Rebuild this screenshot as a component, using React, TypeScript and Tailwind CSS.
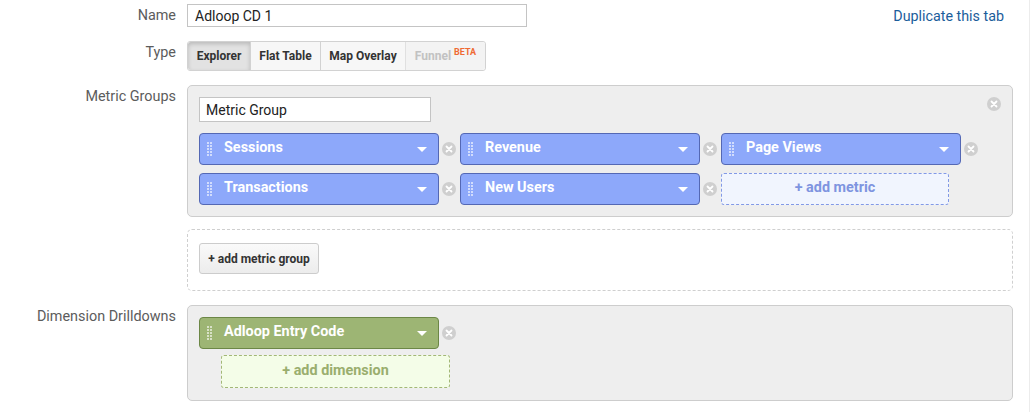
import React from 'react';

const font = { fontFamily: 'Roboto, "Liberation Sans", sans-serif' };

function Grip() {
  return (
    <span className="grid grid-cols-2 gap-x-[1px] gap-y-[1px] w-[5px] shrink-0">
      {Array.from({ length: 10 }).map((_, i) => (
        <span key={i} className="w-[2px] h-[2px] bg-white/60" />
      ))}
    </span>
  );
}

function CloseDot() {
  return (
    <svg width="14" height="14" viewBox="0 0 14 14" className="shrink-0">
      <circle cx="7" cy="7" r="7" fill="#cfcfcf" />
      <path d="M4.5 4.5 L9.5 9.5 M9.5 4.5 L4.5 9.5" stroke="#ffffff" strokeWidth="1.8" strokeLinecap="round" />
    </svg>
  );
}

function Caret() {
  return (
    <svg width="10" height="5" viewBox="0 0 10 5" className="shrink-0">
      <path d="M0 0 L10 0 L5 5 Z" fill="#ffffff" />
    </svg>
  );
}

function Pill({ label, green }: { label: string; green?: boolean }) {
  return (
    <div
      className={
        'w-[240px] h-[32px] rounded-[4px] border flex items-center pl-[7px] pr-[11px] shrink-0 ' +
        (green ? 'bg-[#9db574] border-[#6c8746]' : 'bg-[#8da8fa] border-[#5468b4]')
      }
    >
      <Grip />
      <span className="ml-[12px] pb-[2px] text-[14.4px] font-bold text-white leading-none">{label}</span>
      <span className="ml-auto flex items-center">
        <Caret />
      </span>
    </div>
  );
}

function PillSlot({ label }: { label: string }) {
  return (
    <div className="flex items-center">
      <Pill label={label} />
      <span className="ml-[3px] mr-[4px] flex">
        <CloseDot />
      </span>
    </div>
  );
}

function Label({ children, className = '' }: { children: React.ReactNode; className?: string }) {
  return (
    <div className={'w-[176px] shrink-0 text-right text-[14.4px] leading-5 text-[#5c5c5c] ' + className}>
      {children}
    </div>
  );
}

export default function App() {
  return (
    <div style={font} className="w-[1030px] h-[412px] bg-white border-r border-[#ececec] pt-[4px] overflow-hidden">
      {/* Name */}
      <div className="flex items-center h-[23px]">
        <Label>Name</Label>
        <input
          readOnly
          value="Adloop CD 1"
          className="ml-[11px] w-[340px] h-[23px] border border-[#c4c4c4] px-[7px] text-[14px] text-[#222] outline-none"
          style={font}
        />
        <a className="ml-auto mr-[25px] text-[14.3px] leading-5 text-[#1b5d9b]">Duplicate this tab</a>
      </div>

      {/* Type */}
      <div className="flex items-start mt-[14px] h-[30px]">
        <Label className="pt-[2px]">Type</Label>
        <div className="ml-[11px] flex h-[30px] rounded-[3px] border border-[#d2d2d2] text-[12px] font-bold">
          <span className="w-[62px] flex items-center justify-center bg-[#e2e2e2] text-[#333] shadow-[inset_0_2px_4px_rgba(0,0,0,0.18)] rounded-l-[3px]">
            Explorer
          </span>
          <span className="w-[70px] flex items-center justify-center bg-[#f7f7f7] text-[#333] border-l border-[#d2d2d2]">
            Flat Table
          </span>
          <span className="w-[85px] flex items-center justify-center bg-[#f7f7f7] text-[#333] border-l border-[#d2d2d2]">
            Map Overlay
          </span>
          <span className="w-[80px] flex items-center justify-center bg-[#f3f3f3] text-[#c2c2c2] border-l border-[#e0e0e0] rounded-r-[3px]">
            Funnel
            <span className="ml-[3px] mb-[8px] text-[9px] leading-none text-[#ef6a33]">BETA</span>
          </span>
        </div>
      </div>

      {/* Metric Groups */}
      <div className="flex items-start mt-[14px]">
        <Label className="pt-[2px]">Metric Groups</Label>
        <div className="ml-[11px] w-[826px] h-[132px] bg-[#eeeeee] border border-[#cdcdcd] rounded-[5px] pl-[11px] pr-[11px] pt-[11px] flex">
          <div className="flex flex-col">
            <input
              readOnly
              value="Metric Group"
              className="w-[232px] h-[25px] bg-white border border-[#c4c4c4] px-[6px] text-[14px] text-[#222] outline-none"
              style={font}
            />
            <div className="mt-[11px] flex h-[32px]">
              <PillSlot label="Sessions" />
              <PillSlot label="Revenue" />
              <PillSlot label="Page Views" />
            </div>
            <div className="mt-[8px] flex h-[32px]">
              <PillSlot label="Transactions" />
              <PillSlot label="New Users" />
              <div className="w-[228px] h-[32px] rounded-[3px] border border-dashed border-[#8299e6] bg-[#f1f5fe] flex items-center justify-center pb-[2px] text-[14.4px] font-bold text-[#7e94e0]">
                + add metric
              </div>
            </div>
          </div>
          <span className="ml-auto flex h-[14px]">
            <CloseDot />
          </span>
        </div>
      </div>

      {/* Add metric group */}
      <div className="flex mt-[12px]">
        <div className="w-[176px] shrink-0" />
        <div className="ml-[11px] w-[826px] h-[62px] border border-dashed border-[#cfcfcf] rounded-[5px] pl-[11px] pt-[13px]">
          <button className="w-[120px] h-[31px] rounded-[3px] border border-[#cccccc] bg-gradient-to-b from-[#fafafa] to-[#ececec] text-[12px] font-bold text-[#333]">
            + add metric group
          </button>
        </div>
      </div>

      {/* Dimension Drilldowns */}
      <div className="flex items-start mt-[14px]">
        <Label className="pt-[2px]">Dimension Drilldowns</Label>
        <div className="ml-[11px] w-[826px] h-[96px] bg-[#eeeeee] border border-[#cdcdcd] rounded-[5px] pl-[11px] pt-[11px]">
          <div className="flex items-center h-[32px]">
            <Pill label="Adloop Entry Code" green />
            <span className="ml-[3px] flex">
              <CloseDot />
            </span>
          </div>
          <div className="ml-[22px] mt-[6px] w-[229px] h-[33px] rounded-[3px] border border-dashed border-[#a3b777] bg-[#f4fde8] flex items-center justify-center pb-[2px] text-[14.4px] font-bold text-[#9aae6e]">
            + add dimension
          </div>
        </div>
      </div>
    </div>
  );
}
